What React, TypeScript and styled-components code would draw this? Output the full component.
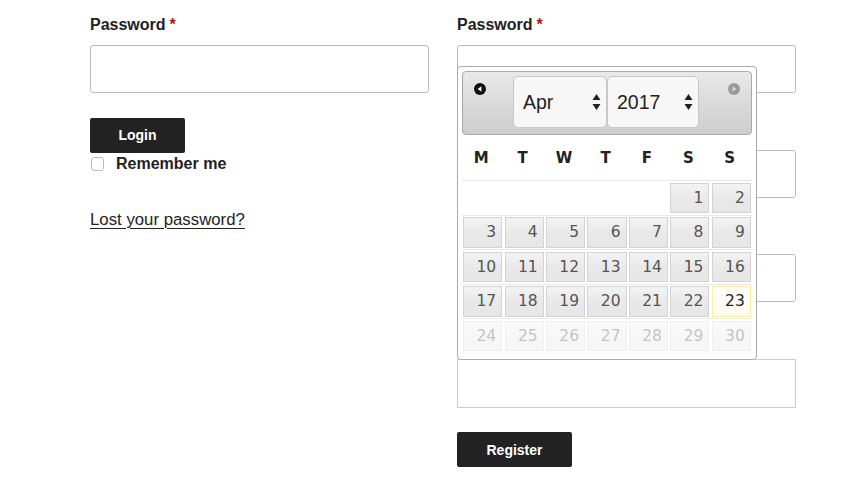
import React from "react";
import styled, { createGlobalStyle } from "styled-components";

const GlobalStyle = createGlobalStyle`
  html, body {
    margin: 0;
    background: #fff;
  }
  body {
    font-family: "Liberation Sans", Arial, sans-serif;
    color: #222;
  }
`;

const Page = styled.div`
  display: grid;
  grid-template-columns: 339px 339px;
  column-gap: 28px;
  padding: 13px 0 0 90px;
`;

const Column = styled.div`
  position: relative;
  display: flex;
  flex-direction: column;
  align-items: flex-start;
`;

const Field = styled.div`
  width: 100%;
  margin-bottom: 24.5px;
`;

const Label = styled.label`
  display: block;
  height: 24px;
  font-weight: 700;
  font-size: 16px;
  line-height: 24px;
  color: #222;
  margin-bottom: 8px;
`;

const Required = styled.span`
  color: #b0151a;
  margin-left: 4px;
`;

const TextInput = styled.input<{ $square?: boolean }>`
  box-sizing: border-box;
  display: block;
  width: 100%;
  height: ${(p) => (p.$square ? 49 : 48)}px;
  margin: 0;
  border: 1px solid ${(p) => (p.$square ? "#ccc" : "#bbb")};
  border-radius: ${(p) => (p.$square ? 0 : 3)}px;
  background: #fff;
`;

const DarkButton = styled.button<{ $width: number; $top: number }>`
  width: ${(p) => p.$width}px;
  height: 35px;
  margin-top: ${(p) => p.$top}px;
  border: 0;
  border-radius: 2px;
  background: #222;
  color: #fff;
  font-family: "Liberation Sans", Arial, sans-serif;
  font-weight: 700;
  font-size: 14px;
  cursor: pointer;
`;

const RememberRow = styled.label`
  display: flex;
  align-items: center;
  gap: 12px;
  margin-top: 1px;
  height: 20px;
  font-weight: 700;
  font-size: 16px;
`;

const Check = styled.span`
  box-sizing: border-box;
  width: 13px;
  height: 14px;
  margin-left: 1px;
  border: 1px solid #bbb;
  border-radius: 3px;
  background: #fff;
`;

const LostLink = styled.a`
  margin-top: 34px;
  font-size: 16.8px;
  line-height: 24px;
  color: #222;
  text-decoration: underline;
  text-decoration-thickness: 1px;
  text-underline-offset: 3px;
`;

/* datepicker popup */

const Picker = styled.div`
  position: absolute;
  top: 53px;
  left: 0;
  z-index: 2;
  box-sizing: border-box;
  width: 300px;
  padding: 4px 4px 5px;
  border: 1px solid #aaa;
  border-radius: 4px;
  background: #fff;
  font-family: "DejaVu Sans", Verdana, sans-serif;
`;

const PickerHeader = styled.div`
  box-sizing: border-box;
  display: flex;
  align-items: flex-start;
  height: 64px;
  border: 1px solid #aaa;
  border-radius: 4px;
  background: linear-gradient(#e9e9e9, #dadada 50%, #cdcdcd);
`;

const NavButton = styled.span<{ $right?: boolean }>`
  display: flex;
  align-items: center;
  justify-content: center;
  width: 34px;
  height: 34px;
  margin-left: ${(p) => (p.$right ? "auto" : "0")};
`;

const SelectGroup = styled.div`
  display: flex;
  margin: 4px 0 0 16px;
`;

const SelectBox = styled.div<{ $width: number }>`
  box-sizing: border-box;
  display: flex;
  align-items: center;
  justify-content: space-between;
  width: ${(p) => p.$width}px;
  height: 52px;
  padding: 0 5px 0 9px;
  border: 1px solid #c8c8c8;
  border-radius: 5px;
  background: #f7f7f7;
  font-family: "Liberation Sans", Arial, sans-serif;
  font-size: 19.5px;
  color: #222;
`;

const DayNames = styled.div`
  display: grid;
  grid-template-columns: repeat(7, 1fr);
  height: 45px;
  align-items: center;
  border-bottom: 1px solid #e6e6e6;
`;

const DayName = styled.span`
  text-align: center;
  font-weight: 700;
  font-size: 15px;
  color: #222;
  padding-right: 3px;
`;

const Week = styled.div<{ $muted?: boolean }>`
  display: grid;
  grid-template-columns: repeat(7, 1fr);
  padding: 1.5px 0;
  border-bottom: 1px solid #e9e9e9;
  opacity: ${(p) => (p.$muted ? 0.35 : 1)};
`;

const DayCell = styled.span<{ $today?: boolean; $empty?: boolean }>`
  box-sizing: border-box;
  height: 30.5px;
  margin: 0 1.2px;
  padding-right: 5px;
  display: flex;
  align-items: center;
  justify-content: flex-end;
  font-size: 15.5px;
  border: 1px solid
    ${(p) => (p.$empty ? "transparent" : p.$today ? "#fcefa1" : "#d3d3d3")};
  background: ${(p) =>
    p.$empty
      ? "transparent"
      : p.$today
      ? "linear-gradient(#fffef9, #fffcf0)"
      : "linear-gradient(#f3f3f3, #e9e9e9 50%, #e6e6e6)"};
  color: ${(p) => (p.$today ? "#222" : "#555")};
`;

const PrevIcon = () => (
  <svg width="12" height="12" viewBox="0 0 12 12">
    <circle cx="6" cy="6" r="6" fill="#111" />
    <path d="M3.6 6 L7.4 3.2 L7.4 8.8 Z" fill="#fff" />
  </svg>
);

const NextIcon = () => (
  <svg width="12" height="12" viewBox="0 0 12 12">
    <circle cx="6" cy="6" r="6" fill="#9a9a9a" />
    <path d="M8.4 6 L4.6 3.2 L4.6 8.8 Z" fill="#d8d8d8" />
  </svg>
);

const SpinArrows = () => (
  <svg width="9" height="16" viewBox="0 0 9 16">
    <path d="M4.5 0 L8.5 6 L0.5 6 Z" fill="#222" />
    <path d="M4.5 16 L8.5 10 L0.5 10 Z" fill="#222" />
  </svg>
);

const dayLetters = ["M", "T", "W", "T", "F", "S", "S"];
const weeks: (number | null)[][] = [
  [null, null, null, null, null, 1, 2],
  [3, 4, 5, 6, 7, 8, 9],
  [10, 11, 12, 13, 14, 15, 16],
  [17, 18, 19, 20, 21, 22, 23],
  [24, 25, 26, 27, 28, 29, 30],
];
const today = 23;

function DatePicker() {
  return (
    <Picker>
      <PickerHeader>
        <NavButton>
          <PrevIcon />
        </NavButton>
        <SelectGroup>
          <SelectBox $width={94}>
            <span>Apr</span>
            <SpinArrows />
          </SelectBox>
          <SelectBox $width={92}>
            <span>2017</span>
            <SpinArrows />
          </SelectBox>
        </SelectGroup>
        <NavButton $right>
          <NextIcon />
        </NavButton>
      </PickerHeader>
      <DayNames>
        {dayLetters.map((d, i) => (
          <DayName key={i}>{d}</DayName>
        ))}
      </DayNames>
      {weeks.map((week, wi) => (
        <Week key={wi} $muted={wi === weeks.length - 1}>
          {week.map((day, di) =>
            day === null ? (
              <DayCell key={di} $empty />
            ) : (
              <DayCell key={di} $today={day === today}>
                {day}
              </DayCell>
            )
          )}
        </Week>
      ))}
    </Picker>
  );
}

export default function App() {
  return (
    <>
      <GlobalStyle />
      <Page>
        <Column>
          <Field>
            <Label>
              Password<Required>*</Required>
            </Label>
            <TextInput type="password" />
          </Field>
          <DarkButton $width={95} $top={0}>
            Login
          </DarkButton>
          <RememberRow>
            <Check />
            Remember me
          </RememberRow>
          <LostLink href="#">Lost your password?</LostLink>
        </Column>
        <Column>
          <Field>
            <Label>
              Password<Required>*</Required>
            </Label>
            <TextInput type="password" />
          </Field>
          {/* these labels sit under the open date picker */}
          <Field>
            <Label aria-label="Email" />
            <TextInput type="text" />
          </Field>
          <Field>
            <Label aria-label="Birthday" />
            <TextInput type="text" />
          </Field>
          <Field>
            <Label aria-label="Phone" />
            <TextInput type="text" $square />
          </Field>
          <DarkButton $width={115} $top={0}>
            Register
          </DarkButton>
          <DatePicker />
        </Column>
      </Page>
    </>
  );
}
